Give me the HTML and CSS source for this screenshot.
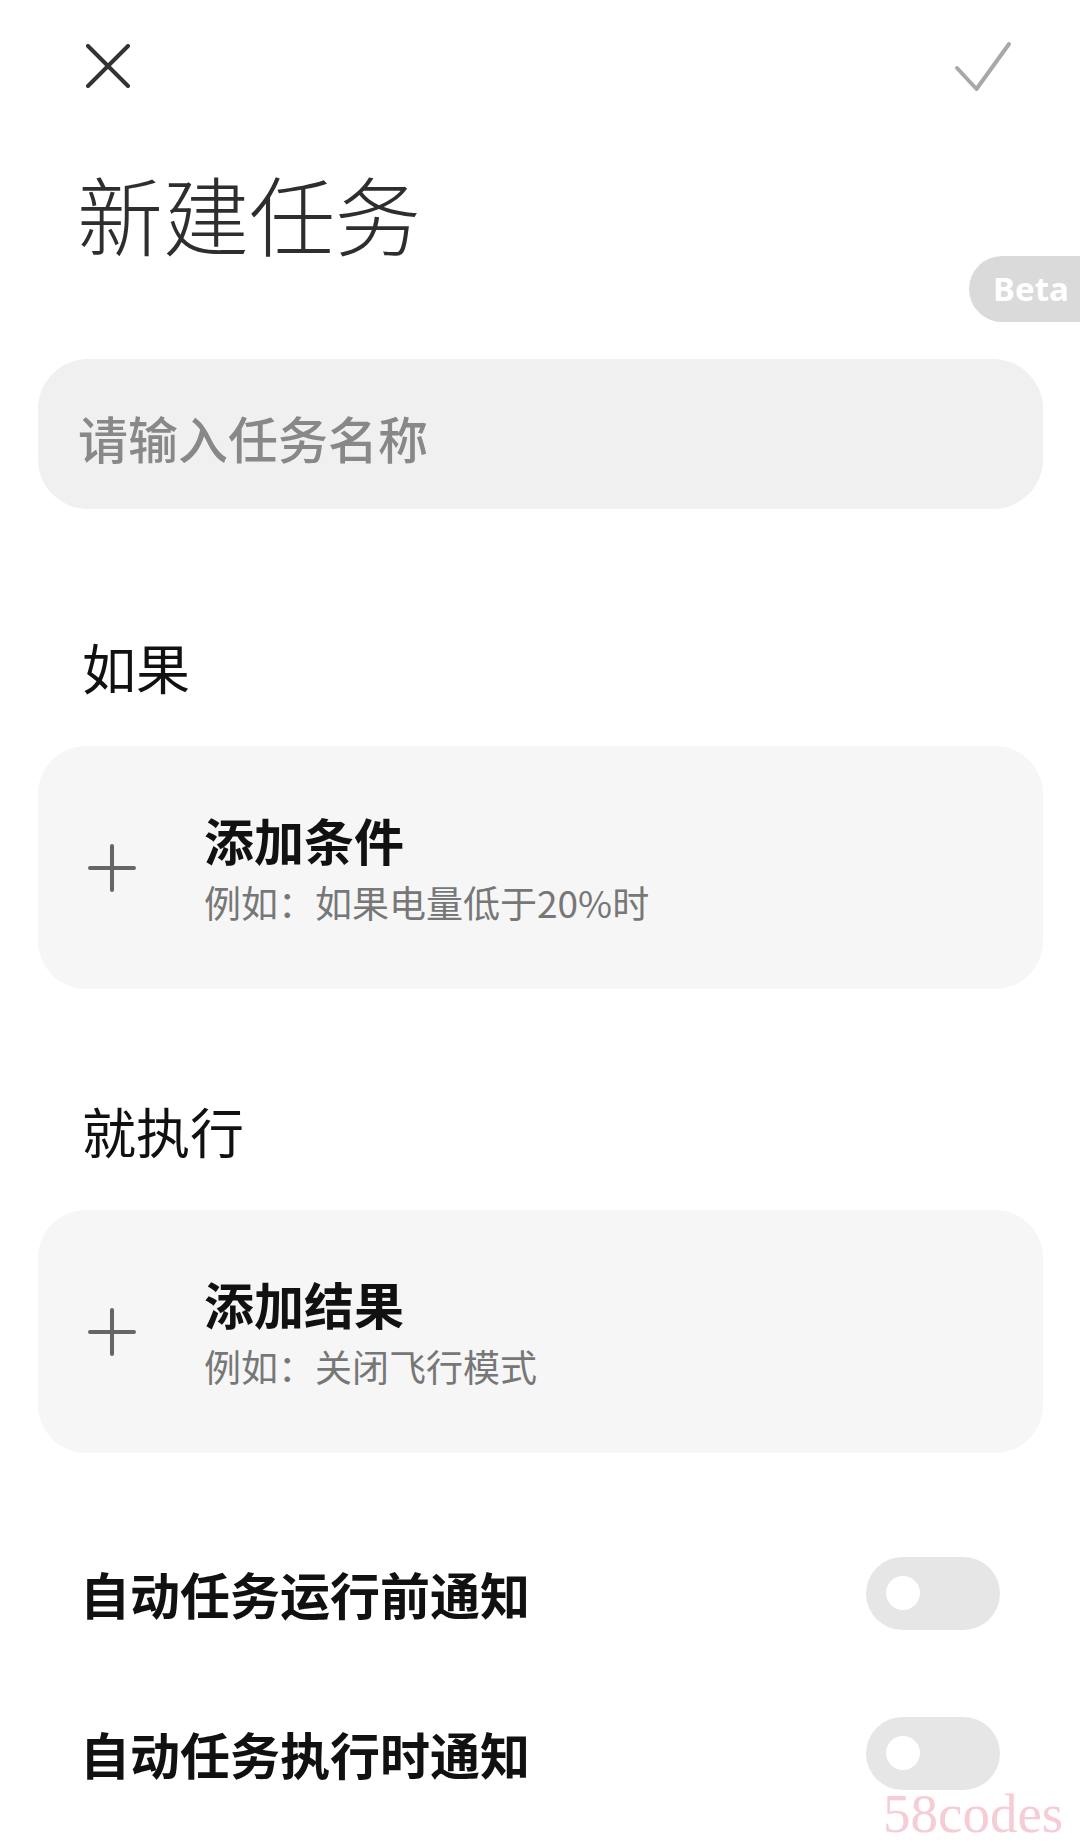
FILE: index.html
```html
<html lang="zh-CN">

<head>
  <meta charset="UTF-8">
  <meta name="viewport" content="width=device-width, initial-scale=1.0">
  <title>新建任务</title>
  <link rel="stylesheet" href="styles.css">
</head>

<body>
  <div class="page">
    <div class="topbar">
      <svg class="icon-close" width="44" height="44" viewBox="0 0 44 44">
        <path d="M2 2 L42 42 M42 2 L2 42" />
      </svg>
      <svg class="icon-check" width="60" height="53" viewBox="0 0 60 53">
        <path d="M4 28 L23.5 49 L56 4" />
      </svg>
    </div>
    <div class="head">
      <h1 class="title">新建任务</h1>
      <span class="beta">Beta</span>
    </div>
    <div class="name-input">请输入任务名称</div>

    <h2 class="section-label">如果</h2>
    <div class="add-card">
      <svg class="icon-plus" width="48" height="48" viewBox="0 0 48 48">
        <path d="M2 24 L46 24 M24 2 L24 46" />
      </svg>
      <div class="add-text">
        <b>添加条件</b>
        <p>例如：如果电量低于20%时</p>
      </div>
    </div>

    <h2 class="section-label">就执行</h2>
    <div class="add-card">
      <svg class="icon-plus" width="48" height="48" viewBox="0 0 48 48">
        <path d="M2 24 L46 24 M24 2 L24 46" />
      </svg>
      <div class="add-text">
        <b>添加结果</b>
        <p>例如：关闭飞行模式</p>
      </div>
    </div>

    <div class="switch-list">
      <div class="switch-row">
        <span>自动任务运行前通知</span>
        <div class="toggle"><i></i></div>
      </div>
      <div class="switch-row">
        <span>自动任务执行时通知</span>
        <div class="toggle"><i></i></div>
      </div>
    </div>
  </div>
  <div class="watermark">58codes</div>
</body>

</html>
```

FILE: styles.css
```css
* {
  box-sizing: border-box;
  margin: 0;
  padding: 0;
}

body {
  background: #FFF;
  font-family: "Noto Sans CJK SC", "Noto Sans", sans-serif;
  color: #111;
  overflow: hidden;
}

.page {
  padding: 0 37px 0 38px;
}

.topbar {
  display: flex;
  height: 132px;
  align-items: center;
  justify-content: space-between;
  padding: 0 30px 0 48px;
}

.topbar svg {
  fill: none;
  stroke-width: 4;
  stroke-linecap: round;
  stroke-linejoin: round;
}

.icon-close {
  stroke: #333;
}

.icon-check {
  stroke: #A8A8A8;
}

.head {
  position: relative;
  padding: 38px 0 0 39px;
}

.title {
  font-size: 86px;
  line-height: 1;
  font-weight: 300;
  color: #2E2E2E;
}

.beta {
  position: absolute;
  top: 124px;
  right: -37px;
  width: 111px;
  height: 66px;
  padding-left: 24px;
  border-radius: 33px 0 0 33px;
  background: #DADADA;
  color: #FFF;
  font-family: "Noto Sans", sans-serif;
  font-weight: 700;
  font-size: 33px;
  line-height: 66px;
}

.name-input {
  display: flex;
  align-items: center;
  height: 150px;
  margin-top: 103px;
  padding: 6px 0 0 40px;
  border-radius: 50px;
  background: #F0F0F0;
  color: #888;
  font-size: 50px;
  font-weight: 500;
  line-height: 1;
}

.section-label {
  margin: 131px 0 52px 44px;
  font-size: 54px;
  font-weight: 400;
  line-height: 1;
  color: #111;
}

.add-card+.section-label {
  margin-top: 115px;
}

.add-card {
  display: flex;
  align-items: center;
  height: 243px;
  padding-left: 50px;
  gap: 68px;
  border-radius: 48px;
  background: #F6F6F6;
}

.icon-plus {
  flex: none;
  fill: none;
  stroke: #666;
  stroke-width: 4;
  stroke-linecap: round;
}

.add-text>b {
  display: block;
  font-size: 50px;
  font-weight: 700;
  line-height: 1;
  color: #111;
}

.add-text>p {
  margin-top: 20px;
  font-size: 37px;
  line-height: 1;
  color: #777;
}

.switch-list {
  display: flex;
  flex-direction: column;
  gap: 60px;
  margin-top: 90px;
  padding: 0 43px 0 42px;
}

.switch-row {
  display: flex;
  height: 100px;
  align-items: center;
  justify-content: space-between;
  font-size: 50px;
  font-weight: 700;
  line-height: 1;
}

.toggle {
  display: flex;
  align-items: center;
  width: 134px;
  height: 73px;
  padding-left: 20px;
  border-radius: 37px;
  background: #E6E6E6;
}

.toggle>i {
  width: 34px;
  height: 34px;
  border-radius: 50%;
  background: #FFF;
}

.watermark {
  position: absolute;
  left: 883px;
  top: 1786px;
  font-family: "Liberation Serif", serif;
  font-size: 55px;
  line-height: 1;
  color: #F6CDD5;
}
```
